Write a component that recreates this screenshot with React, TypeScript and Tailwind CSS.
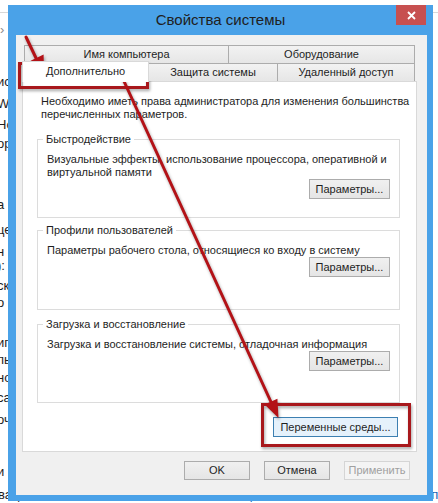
import React from 'react';

// fragments of the page behind the dialog, only their first letters show
const leftBits: { text: string; cls: string }[] = [
  { text: '›', cls: 'mt-[10px] pl-[3px] text-[#8a8a8a]' },
  { text: 'ис', cls: 'mt-[38px]' },
  { text: 'Windows', cls: 'mt-[8px]' },
  { text: 'Home', cls: 'mt-[7px]' },
  { text: 'ор', cls: 'mt-[5px]' },
  { text: 'а', cls: 'mt-[47px]' },
  { text: 'це', cls: 'mt-[11px]' },
  { text: 'н', cls: 'mt-[8px]' },
  { text: '):', cls: 'mt-0' },
  { text: 'ск', cls: 'mt-[6px]' },
  { text: 'о', cls: 'mt-[3px]' },
  { text: 'иг', cls: 'mt-[26px]' },
  { text: 'пь', cls: 'mt-[3px]' },
  { text: 'но', cls: 'mt-[4px]' },
  { text: 'са', cls: 'mt-[6px]' },
  { text: 'оч', cls: 'mt-[8px]' },
  { text: 'и', cls: 'mt-[38px]' },
];

function Backdrop() {
  return (
    <div className="flex flex-col h-full text-[13px] text-[#1e1e1e]">
      <div className="h-[21px] border-b border-[#d8d8d8] overflow-hidden">
        <div className="ml-[295px] -mt-[18px] text-[18px] leading-[24px] text-[#333]">Система</div>
      </div>
      <div className="flex flex-col -ml-[3px]">
        {leftBits.map((b, i) => (
          <div key={i} className={`leading-[14px] whitespace-nowrap ${b.cls}`}>
            {b.text}
          </div>
        ))}
      </div>
      <div className="mt-[8px] flex gap-[12px] whitespace-nowrap leading-[16px] -ml-[2px]">
        <span>вация Windows выполнена.</span>
        <span className="text-[#1a64b4]">Условия лицензионного соглашения на использование</span>
      </div>
    </div>
  );
}

const btn =
  'flex items-center justify-center border border-[#acacac] bg-linear-to-b from-[#f0f0f0] to-[#e5e5e5] text-[11px] text-[#1e1e1e] whitespace-nowrap';

function Group({ title, text, h, mt }: { title: string; text: React.ReactNode; h: string; mt: string }) {
  return (
    <fieldset className={`w-[363px] ${h} ${mt} border border-[#dcdcdc] pl-[5px] pr-[9px] pb-[11px] flex flex-col`}>
      <legend className="px-[3px] text-[11px] leading-[15px]">{title}</legend>
      <p className="mt-[6px] pl-[4px] text-[11px] leading-[13px] whitespace-nowrap">{text}</p>
      <div className="mt-auto flex justify-end">
        <button className={`${btn} w-[81px] h-[20px]`}>Параметры...</button>
      </div>
    </fieldset>
  );
}

function Annotations() {
  return (
    <svg
      className="absolute inset-0 pointer-events-none drop-shadow-[1px_2px_1.5px_rgba(0,0,0,0.35)]"
      width="438"
      height="503"
      viewBox="0 0 438 503"
    >
      <g fill="none" stroke="#a8181c" strokeWidth="3">
        <rect x="19.5" y="63.5" width="128" height="24" />
        <rect x="262.5" y="404.5" width="147" height="41" />
      </g>
      <g stroke="#b31217" strokeWidth="3" strokeLinecap="round">
        <line x1="26" y1="37" x2="36" y2="58" />
        <line x1="122.5" y1="78" x2="271" y2="402" />
      </g>
      <g fill="#b31217">
        <polygon points="44,74 43.6,54.5 30.6,60.8" />
        <polygon points="278.5,418 277.4,398.7 264.6,404.5" />
      </g>
    </svg>
  );
}

const tabIdle =
  'h-[18px] border border-b-0 border-[#acacac] bg-linear-to-b from-[#f2f2f2] to-[#e6e6e6] flex items-center justify-center text-[11px] whitespace-nowrap';

export default function App() {
  return (
    <div className="relative w-[438px] h-[503px] overflow-hidden bg-white font-['Liberation_Sans',Arial,sans-serif] text-[#1e1e1e]">
      <Backdrop />

      <div className="absolute left-[8px] top-[5px] w-[425px] h-[496px] bg-[#4aa2e8] flex flex-col">
        <div className="relative h-[30px] flex items-center justify-center">
          <span className="text-[15px] text-[#202020]">Свойства системы</span>
          <div className="absolute right-[7px] top-0 w-[30px] h-[20px] bg-[#c75050] flex items-center justify-center">
            <svg width="9" height="9" viewBox="0 0 9 9">
              <path d="M1 1 L8 8 M8 1 L1 8" stroke="#fff" strokeWidth="1.8" />
            </svg>
          </div>
        </div>

        <div className="ml-[8px] mr-[6px] mb-[6px] flex-1 bg-[#f0f0f0] flex flex-col pl-[6px] pt-[10px]">
          <div className="flex ml-[2px] h-[18px]">
            <div className={`w-[205px] ${tabIdle}`}>Имя компьютера</div>
            <div className={`w-[186px] border-l-0 ${tabIdle}`}>Оборудование</div>
          </div>
          <div className="flex items-end h-[18px] relative z-10">
            <div className="w-[127px] h-[21px] -mb-[1px] bg-white border border-b-0 border-[#d9d9d9] flex items-center justify-center pb-[2px] text-[11px]">
              Дополнительно
            </div>
            <div className={`w-[129px] border-l-0 ${tabIdle}`}>Защита системы</div>
            <div className={`w-[137px] border-l-0 ${tabIdle}`}>Удаленный доступ</div>
          </div>

          <div className="w-[395px] h-[371px] bg-white border border-[#d9d9d9] flex flex-col px-[14px] pt-[13px]">
            <p className="pl-[4px] text-[11px] leading-[13px] whitespace-nowrap">
              Необходимо иметь права администратора для изменения большинства
              <br />
              перечисленных параметров.
            </p>
            <Group
              title="Быстродействие"
              mt="mt-[11px]"
              h="h-[86px]"
              text={
                <>
                  Визуальные эффекты, использование процессора, оперативной и
                  <br />
                  виртуальной памяти
                </>
              }
            />
            <Group
              title="Профили пользователей"
              mt="mt-[5px]"
              h="h-[87px]"
              text="Параметры рабочего стола, относящиеся ко входу в систему"
            />
            <Group
              title="Загрузка и восстановление"
              mt="mt-[7px]"
              h="h-[86px]"
              text="Загрузка и восстановление системы, отладочная информация"
            />
            <div className="mt-[14px] flex justify-end pr-[4px]">
              <button className="flex items-center justify-center w-[125px] h-[20px] border border-[#3c7fb1] bg-[#e5f1fb] text-[11px] whitespace-nowrap">
                Переменные среды...
              </button>
            </div>
          </div>

          <div className="w-[395px] mt-[9px] flex justify-end gap-[14px] pr-[7px]">
            <button className={`${btn} w-[66px] h-[19px]`}>OK</button>
            <button className={`${btn} w-[66px] h-[19px]`}>Отмена</button>
            <button className="flex items-center justify-center w-[66px] h-[19px] border border-[#d5d5d5] bg-[#f4f4f4] text-[11px] text-[#a0a0a0]">
              Применить
            </button>
          </div>
        </div>
      </div>

      <Annotations />
    </div>
  );
}
